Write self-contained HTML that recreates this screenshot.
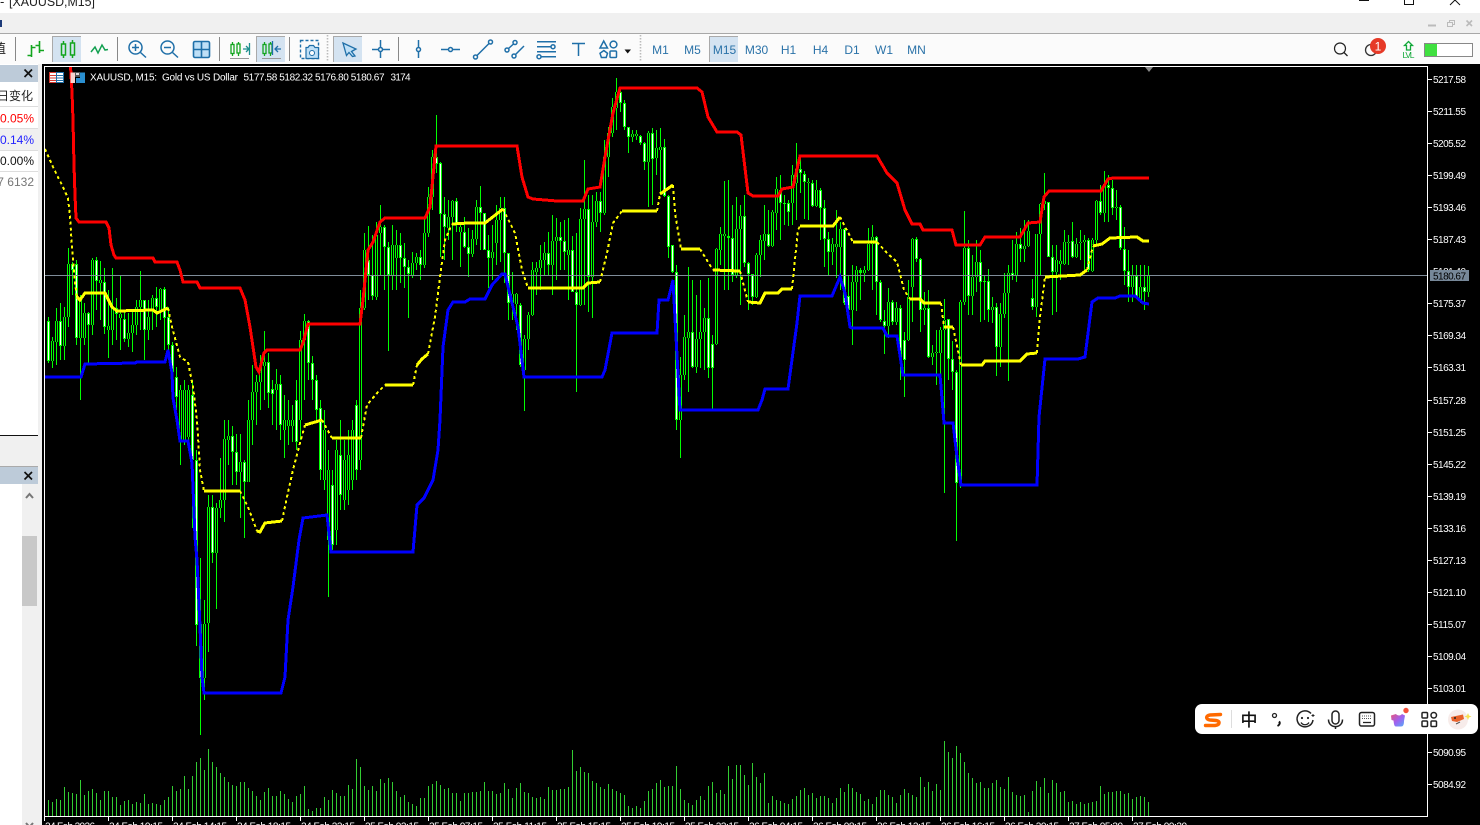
<!DOCTYPE html>
<html lang="zh"><head><meta charset="utf-8"><title>XAUUSD,M15</title>
<style>
html,body{margin:0;padding:0;width:1480px;height:825px;overflow:hidden;background:#000}
svg{display:block;font-family:"Liberation Sans","Noto Sans CJK SC",sans-serif}
.c{shape-rendering:crispEdges;fill:none}
.i{fill:none;stroke:#1f6fa8;stroke-width:1.5}
.tf{font-size:12px;fill:#2a72a8;text-anchor:middle}
.p{font-size:10px;fill:#fff}
.t{font-size:10px;fill:#fff}
</style></head><body>
<svg width="1480" height="825" viewBox="0 0 1480 825" xmlns="http://www.w3.org/2000/svg">
<!-- window chrome -->
<rect width="1480" height="13" fill="#fff"/>
<text x="0" y="6" font-size="13" fill="#222">-</text>
<text x="9" y="6" font-size="13" fill="#222" textLength="86" lengthAdjust="spacingAndGlyphs">[XAUUSD,M15]</text>
<path d="M1359 .5H1369M1404.5 0V4.5H1413.5V0M1450 5L1455 0L1460 5" fill="none" stroke="#111"/>
<rect y="13" width="1480" height="20" fill="#f0f0f0"/>
<rect x="0" y="20" width="2" height="7" fill="#1c3a78"/>
<path d="M1428 25.5H1436" stroke="#bbb" stroke-width="2"/>
<path d="M1447.5 22.5H1452.5V26.5H1447.5ZM1449.5 22V20.5H1454.5V24.5H1453" fill="none" stroke="#bbb"/>
<path d="M1466.5 20.5L1472 26M1472 20.5L1466.5 26" stroke="#bbb" stroke-width="1.6"/>
<rect y="33" width="1480" height="1" fill="#a8a8a8"/>
<rect y="34" width="1480" height="30" fill="#fbfbfb"/>
<!-- toolbar -->
<text x="-7" y="53" font-size="13" fill="#222">值</text>
<g fill="#888"><rect x="15" y="37" width="1" height="24"/><rect x="117" y="37" width="1" height="24"/><rect x="219" y="37" width="1" height="24"/><rect x="289" y="37" width="1" height="24"/><rect x="398" y="37" width="1" height="24"/></g>
<g fill="#d4e3f1"><rect x="52" y="36" width="29" height="26"/><rect x="256" y="36" width="29" height="26"/><rect x="333" y="36" width="29" height="26"/><rect x="709" y="36" width="29" height="26"/></g>
<path d="M52.5 62V36.5H81M256.5 62V36.5H285M333.5 62V36.5H362M709.5 62V36.5H738" fill="none" stroke="#aaa"/>
<path d="M31.5 45V57M31.5 47.5H35.5M27.5 55.5H31.5M39.5 41V53M35.5 45.5H39.5M39.5 50.5H44" fill="none" stroke="#12a51e" stroke-width="1.6"/>
<g fill="none" stroke="#12a51e" stroke-width="1.5"><rect x="61.5" y="44" width="4" height="11"/><rect x="70.5" y="43" width="4" height="12"/><path d="M63.5 41V44M63.5 55V58M72.5 40V43M72.5 55V58"/></g>
<path d="M91 52L95 47L98 53L102 45L105 50L108 49.5" fill="none" stroke="#12a050" stroke-width="1.5"/>
<g class="i"><circle cx="135.5" cy="47.5" r="6.5"/><path d="M140.5 52.5L146 57.5M132 47.5H139M135.5 44V51"/><circle cx="167.5" cy="47.5" r="6.5"/><path d="M172.5 52.5L178 57.5M164 47.5H171"/></g>
<rect x="193.5" y="41.5" width="16" height="16" rx="1.5" fill="#bfe0f7" stroke="#1f6fa8" stroke-width="1.6"/><path d="M201.5 41.5V57.5M193.5 49.5H209.5" stroke="#1f6fa8" stroke-width="1.6"/>
<g fill="none" stroke="#12a51e" stroke-width="1.3"><rect x="231" y="44.5" width="3" height="9"/><rect x="237" y="44" width="3" height="9"/><path d="M232.5 42V44.5M232.5 53.5V56M238.5 42V44M238.5 53V56"/><rect x="263" y="44.5" width="3" height="9"/><rect x="269" y="44" width="3" height="9"/><path d="M264.5 42V44.5M264.5 53.5V56M270.5 42V44M270.5 53V56"/></g>
<path d="M230 58.5H249M262 58.5H281" stroke="#999"/>
<path d="M243 49H248.5M246 46L249 49L246 52M249.5 43V55" fill="none" stroke="#1f8f8f" stroke-width="1.3"/>
<path d="M272.5 41V55" stroke="#1f6fa8" stroke-width="1.3"/><path d="M275 49H281M278 46L275 49L278 52" fill="none" stroke="#1f6fa8" stroke-width="1.3"/>
<rect x="300.5" y="40.5" width="18" height="18" fill="none" stroke="#1f6fa8" stroke-width="1.4" stroke-dasharray="3 2"/>
<path d="M306 47.5H308L309.5 45.5H313.5L315 47.5H318.5V58.5H306Z" fill="#bfe0f7" stroke="#1f6fa8" stroke-width="1.2"/><circle cx="312" cy="53" r="2.5" fill="#fff" stroke="#1f6fa8"/>
<path d="M327.5 35V62M640.5 35V62" stroke="#bbb" stroke-dasharray="1.5 1.5" stroke-width="1.6"/>
<path d="M343 43L356 49L351.5 51.5L355 56L352.5 56.5L349 52.5L346.5 55.5Z" fill="#bfe0f7" stroke="#1f6fa8" stroke-width="1.3"/>
<g class="i"><path d="M372 49.5H378M383 49.5H390M380.5 40V47M380.5 52V58"/><circle cx="380.5" cy="49.5" r="2"/><path d="M418.5 40V47M418.5 52V58"/><circle cx="418.5" cy="49.5" r="2"/><path d="M441 49.5H448M453 49.5H460"/><circle cx="450.5" cy="49.5" r="2"/><circle cx="475.5" cy="57" r="2"/><circle cx="490.5" cy="42" r="2"/><path d="M477 55.5L489 43.5"/><circle cx="507" cy="50" r="2"/><circle cx="515" cy="42.5" r="2"/><circle cx="514" cy="56" r="2"/><path d="M508.5 48.5L513.5 44M515.5 54.5L524 46"/><path d="M537 41.7H556M537 46.7H551M537 51.7H556M541 56.7H556"/><circle cx="553" cy="46.7" r="2"/><circle cx="539" cy="56.7" r="2"/><path d="M572 43.5H585M578.5 43.5V56"/><path d="M603.7 41L607.5 48H600Z"/><circle cx="613.5" cy="44.5" r="3.4"/><path d="M603.8 50.5L607.5 53.3L606.2 57.5H601.4L600 53.3Z"/><rect x="610" y="51" width="6.5" height="6.5" rx="1"/></g>
<path d="M624.5 49.5H631L627.7 53.5Z" fill="#111"/>
<text class="tf" x="660.500" y="54">M1</text><text class="tf" x="692.500" y="54">M5</text><text class="tf" x="724.500" y="54">M15</text><text class="tf" x="756.500" y="54">M30</text><text class="tf" x="788.500" y="54">H1</text><text class="tf" x="820.500" y="54">H4</text><text class="tf" x="852" y="54">D1</text><text class="tf" x="884" y="54">W1</text><text class="tf" x="916.500" y="54">MN</text>
<circle cx="1340" cy="48.5" r="5.5" fill="none" stroke="#222" stroke-width="1.2"/><path d="M1344 52.5L1347.5 56" stroke="#222" stroke-width="1.3"/>
<circle cx="1371" cy="50" r="5.5" fill="none" stroke="#333" stroke-width="1.3"/><circle cx="1378" cy="46" r="8" fill="#e63a28"/><text x="1378" y="50.5" font-size="12" fill="#fff" text-anchor="middle">1</text>
<path d="M1408.5 41.5L1412.5 45.5H1410.5V50H1406.5V45.5H1404.5Z" fill="none" stroke="#12a83a" stroke-width="1.3"/><text x="1408.5" y="58" font-size="8.5" fill="#12a83a" text-anchor="middle" textLength="12">LVL</text>
<rect x="1424.5" y="43.5" width="48" height="13" fill="#fff" stroke="#888"/><rect x="1425" y="44" width="12" height="12" fill="#40e040"/>
<!-- left panel -->
<rect y="64" width="42" height="761" fill="#fff"/>
<rect x="38" y="64" width="4" height="761" fill="#f0f0f0"/>
<rect y="65" width="38" height="17" fill="#bdcbd9"/>
<path d="M24.5 69.5L32 77M32 69.5L24.5 77" stroke="#111" stroke-width="1.7"/>
<rect y="129" width="38" height="21" fill="#f0f0f0"/>
<g fill="#ddd"><rect y="106" width="38" height="1"/><rect y="128" width="38" height="1"/><rect y="150" width="38" height="1"/><rect y="171" width="38" height="1"/></g>
<g font-size="12" text-anchor="end"><text x="33" y="100" fill="#222">日变化</text><text x="34" y="122.500" fill="#f00">0.05%</text><text x="34" y="144" fill="#2222ff">0.14%</text><text x="34" y="165" fill="#111">0.00%</text><text x="34" y="186" fill="#777">7 6132</text></g>
<rect y="435" width="38" height="1" fill="#111"/>
<rect y="436" width="38" height="30" fill="#f0f0f0"/>
<rect y="466" width="38" height="1" fill="#aaa"/>
<rect y="467" width="38" height="17" fill="#bdcbd9"/>
<path d="M24.500 472L32 479.500M32 472L24.500 479.500" stroke="#111" stroke-width="1.7"/>
<rect x="22" y="484" width="16" height="341" fill="#f0f0f0"/>
<rect x="22" y="536" width="15" height="70" fill="#c8c8c8"/>
<path d="M26 498L29.500 494L33 498M26 823L29.500 827L33 823" fill="none" stroke="#777" stroke-width="2"/>
<!-- chart -->
<rect x="42" y="64" width="1438" height="761" fill="#000"/>
<defs>
<path id="up" class="c" d="M52.500 341V361M56.500 321V342M64.500 317V346M68.500 264V317M80.500 300V338M84.500 313V338M92.500 260V325M100.500 280V283M108.500 326V330M112.500 307V330M120.500 314V318M128.500 333V339M132.500 325V333M136.500 307V325M140.500 300V307M148.500 317V330M152.500 298V310M160.500 289V310M180.500 390V440M184.500 390V440M188.500 390V437M204.500 624V678M208.500 507V623M216.500 508V553M220.500 500V508M224.500 439V500M228.500 436V440M240.500 462V472M248.500 420V482M252.500 392V420M256.500 382V392M260.500 366V382M264.500 362V366M276.500 384V390M284.500 420V430M288.500 420V426M292.500 420V426M300.500 340V420M304.500 321V340M324.500 430V480M328.500 470V540M336.500 450V530M344.500 460V500M348.500 455V490M352.500 430V480M360.500 308V460M364.500 250V308M376.500 235V297M380.500 227V233M392.500 245V275M396.500 245V258M412.500 263V275M416.500 257V263M424.500 233V265M428.500 197V233M432.500 157V197M448.500 217V228M452.500 201V217M460.500 227V232M472.500 239V254M476.500 207V239M492.500 252V258M496.500 220V243M500.500 208V220M512.500 294V303M516.500 294V304M524.500 339V370M528.500 315V339M532.500 270V315M536.500 268V272M540.500 260V268M544.500 253V260M552.500 241V265M556.500 237V241M568.500 250V255M580.500 219V305M584.500 209V219M592.500 222V277M596.500 201V222M604.500 157V213M608.500 133V157M612.500 107V133M616.500 92V108M632.500 134V137M636.500 134V136M648.500 133V162M656.500 148V158M660.500 147V150M680.500 375V420M684.500 337V375M688.500 332V338M696.500 339V367M700.500 332V339M704.500 318V332M716.500 249V344M720.500 234V250M724.500 234V236M736.500 229V275M740.500 216V229M756.500 255V297M760.500 240V255M764.500 234V241M772.500 212V246M776.500 189V213M792.500 175V203M796.500 169V183M808.500 182V183M816.500 190V206M832.500 244V252M836.500 244V247M840.500 229V247M852.500 282V310M856.500 270V282M864.500 270V273M868.500 244V270M872.500 237V244M888.500 302V326M896.500 308V322M908.500 297V340M912.500 239V287M924.500 308V310M932.500 353V357M936.500 352V353M940.500 330V353M944.500 320V330M960.500 302V483M964.500 248V302M972.500 277V296M976.500 262V277M992.500 307V310M1000.500 314V347M1004.500 293V314M1008.500 273V293M1016.500 244V276M1024.500 246V249M1028.500 231V246M1036.500 234V307M1040.500 204V234M1044.500 201V204M1056.500 260V272M1060.500 261V264M1064.500 242V264M1068.500 242V243M1076.500 244V257M1080.500 242V243M1084.500 240V242M1092.500 240V271M1096.500 201V240M1104.500 185V213M1116.500 207V208M1132.500 276V287M1140.500 287V300M1148.500 275V292"/>
</defs>
<!-- wicks -->
<path class="c" stroke="#0f0" stroke-width="1" d="M48.500 317V363M52.500 337V368M56.500 308V365M60.500 303V360M64.500 307V360M68.500 248V327M72.500 262V295M76.500 260V345M80.500 295V400M84.500 303V345M88.500 312V363M92.500 258V335M96.500 257V310M100.500 261V320M104.500 268V334M108.500 290V358M112.500 268V345M116.500 298V340M120.500 276V350M124.500 312V342M128.500 313V347M132.500 312V352M136.500 300V335M140.500 271V330M144.500 300V360M148.500 300V340M152.500 295V330M156.500 287V327M160.500 288V320M164.500 287V350M168.500 307V350M172.500 342V378M176.500 367V410M180.500 385V465M184.500 380V445M188.500 385V440M192.500 380V528M196.500 450V646M200.500 558V735M204.500 600V700M208.500 495V652M212.500 495V563M216.500 503V609M220.500 458V518M224.500 420V522M228.500 420V465M232.500 426V485M236.500 434V485M240.500 434V518M244.500 460V538M248.500 400V482M252.500 365V445M256.500 375V425M260.500 355V410M264.500 331V400M268.500 353V408M272.500 380V425M276.500 369V430M280.500 375V440M284.500 395V458M288.500 400V445M292.500 405V442M296.500 380V450M300.500 331V440M304.500 314V400M308.500 320V380M312.500 356V400M316.500 375V420M320.500 400V480M324.500 410V490M328.500 450V597M332.500 470V550M336.500 440V545M340.500 420V510M344.500 440V510M348.500 430V505M352.500 420V490M356.500 400V480M360.500 290V470M364.500 233V310M368.500 226V300M372.500 235V300M376.500 222V300M380.500 205V275M384.500 225V290M388.500 242V351M392.500 225V290M396.500 230V290M400.500 233V283M404.500 243V288M408.500 260V318M412.500 252V278M416.500 253V270M420.500 250V280M424.500 218V268M428.500 187V237M432.500 150V210M436.500 115V173M440.500 162V257M444.500 197V260M448.500 200V240M452.500 200V260M456.500 198V232M460.500 225V267M464.500 217V248M468.500 228V277M472.500 230V257M476.500 200V245M480.500 186V250M484.500 213V250M488.500 235V288M492.500 225V280M496.500 205V265M500.500 197V262M504.500 197V283M508.500 253V320M512.500 272V320M516.500 293V330M520.500 303V367M524.500 335V411M528.500 312V350M532.500 262V316M536.500 262V295M540.500 245V290M544.500 242V275M548.500 232V275M552.500 215V295M556.500 218V280M560.500 222V270M564.500 220V270M568.500 218V300M572.500 236V292M576.500 233V392M580.500 208V306M584.500 160V305M588.500 195V312M592.500 195V318M596.500 192V227M600.500 192V232M604.500 140V215M608.500 127V177M612.500 98V137M616.500 78V130M620.500 88V112M624.500 100V130M628.500 127V153M632.500 130V142M636.500 130V140M640.500 135V145M644.500 142V170M648.500 131V207M652.500 128V205M656.500 130V175M660.500 128V193M664.500 139V197M668.500 195V258M672.500 245V273M676.500 265V430M680.500 357V458M684.500 315V380M688.500 267V392M692.500 280V368M696.500 295V373M700.500 280V368M704.500 308V370M708.500 278V378M712.500 335V410M716.500 248V345M720.500 227V265M724.500 181V290M728.500 180V290M732.500 205V282M736.500 197V278M740.500 205V305M744.500 195V267M748.500 262V310M752.500 274V305M756.500 253V298M760.500 235V277M764.500 205V260M768.500 210V247M772.500 210V247M776.500 177V230M780.500 175V240M784.500 195V225M788.500 200V226M792.500 165V225M796.500 143V220M800.500 155V193M804.500 171V219M808.500 178V220M812.500 180V207M816.500 180V207M820.500 188V240M824.500 200V267M828.500 232V275M832.500 238V265M836.500 210V278M840.500 222V290M844.500 228V305M848.500 275V325M852.500 265V345M856.500 266V311M860.500 268V300M864.500 266V282M868.500 228V271M872.500 225V290M876.500 236V315M880.500 280V322M884.500 310V354M888.500 288V338M892.500 300V325M896.500 302V325M900.500 305V380M904.500 332V397M908.500 280V341M912.500 238V322M916.500 237V262M920.500 258V332M924.500 292V325M928.500 290V358M932.500 345V365M936.500 330V385M940.500 327V385M944.500 299V493M948.500 319V380M952.500 341V390M956.500 370V541M960.500 300V488M964.500 211V305M968.500 240V315M972.500 255V315M976.500 240V292M980.500 250V322M984.500 275V320M988.500 269V322M992.500 297V323M996.500 303V376M1000.500 303V367M1004.500 273V318M1008.500 265V381M1012.500 240V280M1016.500 232V282M1020.500 228V262M1024.500 220V262M1028.500 220V247M1032.500 279V310M1036.500 234V317M1040.500 203V275M1044.500 173V210M1048.500 203V257M1052.500 245V315M1056.500 245V312M1060.500 250V280M1064.500 230V265M1068.500 235V265M1072.500 222V258M1076.500 238V258M1080.500 230V260M1084.500 235V270M1088.500 238V272M1092.500 238V272M1096.500 200V245M1100.500 185V215M1104.500 171V222M1108.500 175V222M1112.500 180V215M1116.500 190V220M1120.500 205V250M1124.500 227V285M1128.500 250V302M1132.500 265V302M1136.500 265V298M1140.500 265V303M1144.500 265V310M1148.500 266V297"/>
<!-- bodies -->
<use href="#up" stroke="#0f0" stroke-width="3"/>
<path class="c" stroke="#0f0" stroke-width="3" d="M48.500 321V361M60.500 321V346M72.500 264V270M76.500 264V338M88.500 313V325M96.500 260V281M104.500 282V327M116.500 308V314M124.500 319V339M144.500 300V330M156.500 298V307M164.500 289V318M168.500 317V345M172.500 345V372M176.500 377V397M192.500 395V460M196.500 460V625M200.500 624V678M212.500 507V553M232.500 436V452M236.500 452V472M244.500 462V482M268.500 362V393M272.500 389V394M280.500 384V425M296.500 400V442M308.500 321V363M312.500 363V380M316.500 380V410M320.500 408V470M332.500 485V545M340.500 455V495M356.500 405V470M368.500 260V275M372.500 275V296M384.500 227V247M388.500 247V275M400.500 245V258M404.500 258V267M408.500 267V274M420.500 257V265M436.500 157V164M440.500 163V214M444.500 214V227M456.500 201V223M464.500 232V247M468.500 247V254M480.500 207V213M484.500 213V250M488.500 250V258M504.500 208V253M508.500 253V303M520.500 305V365M548.500 253V265M560.500 237V241M564.500 241V252M572.500 250V292M576.500 292V305M588.500 209V277M600.500 201V213M620.500 92V103M624.500 103V127M628.500 127V137M640.500 136V143M644.500 143V162M652.500 133V159M664.500 147V196M668.500 196V247M672.500 245V272M676.500 272V420M692.500 332V367M708.500 318V368M712.500 344V368M728.500 236V238M732.500 238V275M744.500 216V263M748.500 263V274M752.500 274V297M768.500 234V246M780.500 190V203M784.500 203V204M788.500 203V212M800.500 169V173M804.500 174V182M812.500 183V206M820.500 190V208M824.500 208V239M828.500 239V252M844.500 229V303M848.500 296V310M860.500 270V273M876.500 237V282M880.500 282V320M884.500 321V326M892.500 302V322M900.500 308V360M904.500 340V360M916.500 239V259M920.500 259V310M928.500 308V357M948.500 319V359M952.500 359V372M956.500 372V483M968.500 248V296M980.500 262V282M984.500 281V282M988.500 281V310M996.500 307V347M1012.500 273V276M1020.500 244V249M1032.500 298V307M1048.500 202V257M1052.500 257V272M1072.500 241V257M1088.500 240V270M1100.500 201V213M1108.500 185V188M1112.500 188V208M1120.500 207V248M1124.500 249V271M1128.500 271V287M1136.500 276V297M1144.500 287V292"/>
<use href="#up" stroke="#000" stroke-width="1"/>
<path class="c" stroke="#fff" stroke-width="1" d="M48.500 322V360M60.500 322V345M72.500 265V269M76.500 265V337M88.500 314V324M96.500 261V280M104.500 283V326M116.500 309V313M124.500 320V338M144.500 301V329M156.500 299V306M164.500 290V317M168.500 318V344M172.500 346V371M176.500 378V396M192.500 396V459M196.500 461V624M200.500 625V677M212.500 508V552M232.500 437V451M236.500 453V471M244.500 463V481M268.500 363V392M272.500 390V393M280.500 385V424M296.500 401V441M308.500 322V362M312.500 364V379M316.500 381V409M320.500 409V469M332.500 486V544M340.500 456V494M356.500 406V469M368.500 261V274M372.500 276V295M384.500 228V246M388.500 248V274M400.500 246V257M404.500 259V266M408.500 268V273M420.500 258V264M436.500 158V163M440.500 164V213M444.500 215V226M456.500 202V222M464.500 233V246M468.500 248V253M480.500 208V212M484.500 214V249M488.500 251V257M504.500 209V252M508.500 254V302M520.500 306V364M548.500 254V264M560.500 238V240M564.500 242V251M572.500 251V291M576.500 293V304M588.500 210V276M600.500 202V212M620.500 93V102M624.500 104V126M628.500 128V136M640.500 137V142M644.500 144V161M652.500 134V158M664.500 148V195M668.500 197V246M672.500 246V271M676.500 273V419M692.500 333V366M708.500 319V367M712.500 345V367M732.500 239V274M744.500 217V262M748.500 264V273M752.500 275V296M768.500 235V245M780.500 191V202M788.500 204V211M800.500 170V172M804.500 175V181M812.500 184V205M820.500 191V207M824.500 209V238M828.500 240V251M844.500 230V302M848.500 297V309M876.500 238V281M880.500 283V319M884.500 322V325M892.500 303V321M900.500 309V359M904.500 341V359M916.500 240V258M920.500 260V309M928.500 309V356M948.500 320V358M952.500 360V371M956.500 373V482M968.500 249V295M980.500 263V281M988.500 282V309M996.500 308V346M1012.500 274V275M1020.500 245V248M1032.500 299V306M1048.500 203V256M1052.500 258V271M1072.500 242V256M1088.500 241V269M1100.500 202V212M1108.500 186V187M1112.500 189V207M1120.500 208V247M1124.500 250V270M1128.500 272V286M1136.500 277V296M1144.500 288V291"/>
<!-- bid line -->
<rect x="45" y="275" width="1382" height="1" fill="#7f8c99"/>
<!-- envelope lines -->
<polyline class="c" stroke="#f00" stroke-width="3" points="70.500,66 72,92 73,120 74,165 75,195 76,218 79,222 106,222 109,228 111,245 114,255 116,258 153,258 155,262 177,262 180,270 183,282 197,282 200,288 240,288 245,300 250,327 256,367 259,372 264,353 267,350 300,350 303,343 308,324 360,324 363,300 368,250 373,242 380,222 385,218 425,218 430,207 436,146 517,146 522,177 528,197 533,199 557,201 583,201 588,189 600,187 605,157 613,113 620,88 697,88 702,92 708,117 717,132 737,132 741,135 748,193 753,196 778,196 782,189 793,187 800,156 877,156 887,173 897,183 905,210 912,224 920,224 923,230 952,230 956,245 980,245 985,237 1020,237 1028,223 1040,222 1044,197 1049,191 1101,191 1108,179 1113,178 1149,178"/>
<polyline class="c" stroke="#00f" stroke-width="3" points="45,377 81,377 85,364 135,363 137,362 165,362 168,350 172,373 173,398 177,420 180,441 188,441 192,463 195,537 197,560 200,627 202,677 204,693 281,693 285,677 288,620 293,587 299,540 303,518 327,515 331,552 413,552 417,505 424,498 433,480 438,450 440,420 443,347 448,310 453,302 465,302 470,299 485,299 492,285 502,274 505,274 512,303 518,327 524,377 602,377 605,370 612,333 657,333 659,300 668,300 673,280 676,337 680,410 758,410 762,400 765,389 788,389 797,323 800,296 832,296 840,277 845,293 850,327 852,328 883,328 887,336 897,336 903,375 940,375 944,423 953,423 957,457 961,485 1037,485 1039,417 1045,359 1078,359 1085,357 1092,302 1098,298 1115,298 1120,296 1135,296 1143,303 1149,304"/>
<g class="c" stroke="#ff0" stroke-width="3">
<polyline points="77,297 80,300 85,293 105,293 112,307 117,311 153,310 157,313 168,308"/>
<polyline points="204,491 240,491"/><polyline points="257,531 260,532 265,523 282,521"/>
<polyline points="305,425 322,420"/><polyline points="332,438 361,438"/><polyline points="385,385 413,385"/><polyline points="417,365 422,359 428,354"/>
<polyline points="452,224 468,223 485,223 503,209"/><polyline points="528,288 583,288 588,283 600,282"/><polyline points="622,211 657,211"/><polyline points="660,194 673,185"/>
<polyline points="681,249 700,249"/><polyline points="713,270 740,271"/><polyline points="748,302 760,303 765,293 778,293 782,289 792,289"/>
<polyline points="800,226 833,226 840,217"/><polyline points="853,242 877,242"/><polyline points="910,299 920,299 924,303 941,303"/><polyline points="944,327 953,327"/>
<polyline points="961,365 982,365 985,361 1020,361 1027,354 1037,353"/><polyline points="1045,277 1080,275 1087,270"/><polyline points="1093,246 1102,244 1110,238 1137,237 1143,241 1149,241"/>
</g>
<g class="c" stroke="#ff0" stroke-width="2" stroke-dasharray="3 3">
<polyline points="45,149 53,167 63,187 68,198 70,217 72,247 75,283 77,297"/>
<polyline points="168,308 172,327 180,357 188,362 193,387 197,420 200,470 204,491"/>
<polyline points="240,491 248,507 257,531"/><polyline points="282,521 287,497 293,470 300,443 305,425"/><polyline points="322,420 332,438"/><polyline points="361,438 367,405 378,392 385,385"/><polyline points="413,385 417,365"/>
<polyline points="428,354 435,317 440,277 445,240 452,224"/><polyline points="503,209 515,233 522,270 528,288"/><polyline points="600,282 607,253 613,223 622,211"/><polyline points="657,211 660,194"/><polyline points="673,185 675,213 681,249"/>
<polyline points="700,249 713,270"/><polyline points="740,271 748,302"/><polyline points="792,289 798,230 800,226"/><polyline points="840,217 853,242"/><polyline points="877,242 887,253 897,262 904,290 910,299"/><polyline points="941,303 944,327"/><polyline points="953,327 961,365"/><polyline points="1037,353 1040,317 1045,277"/><polyline points="1087,270 1093,246"/>
</g>
<!-- volumes -->
<path class="c" stroke="#32cd32" stroke-width="1" d="M48.500 800V816M52.500 802V816M56.500 799V816M60.500 800V816M64.500 787V816M68.500 792V816M72.500 793V816M76.500 794V816M80.500 780V816M84.500 795V816M88.500 791V816M92.500 789V816M96.500 793V816M100.500 800V816M104.500 791V816M108.500 791V816M112.500 797V816M116.500 797V816M120.500 805V816M124.500 801V816M128.500 800V816M132.500 804V816M136.500 802V816M140.500 803V816M144.500 794V816M148.500 804V816M152.500 803V816M156.500 804V816M160.500 805V816M164.500 800V816M168.500 797V816M172.500 786V816M176.500 791V816M180.500 789V816M184.500 776V816M188.500 789V816M192.500 776V816M196.500 762V816M200.500 758V816M204.500 770V816M208.500 749V816M212.500 762V816M216.500 767V816M220.500 773V816M224.500 777V816M228.500 782V816M232.500 785V816M236.500 786V816M240.500 782V816M244.500 782V816M248.500 788V816M252.500 791V816M256.500 796V816M260.500 800V816M264.500 792V816M268.500 788V816M272.500 796V816M276.500 796V816M280.500 791V816M284.500 794V816M288.500 799V816M292.500 802V816M296.500 796V816M300.500 794V816M304.500 786V816M308.500 809V816M312.500 811V816M316.500 808V816M320.500 808V816M324.500 797V816M328.500 800V816M332.500 790V816M336.500 793V816M340.500 796V816M344.500 796V816M348.500 785V816M352.500 789V816M356.500 759V816M360.500 767V816M364.500 786V816M368.500 790V816M372.500 786V816M376.500 791V816M380.500 779V816M384.500 783V816M388.500 778V816M392.500 782V816M396.500 791V816M400.500 797V816M404.500 795V816M408.500 802V816M412.500 804V816M416.500 806V816M420.500 798V816M424.500 798V816M428.500 786V816M432.500 784V816M436.500 781V816M440.500 785V816M444.500 789V816M448.500 788V816M452.500 793V816M456.500 793V816M460.500 801V816M464.500 793V816M468.500 793V816M472.500 792V816M476.500 792V816M480.500 791V816M484.500 782V816M488.500 791V816M492.500 791V816M496.500 794V816M500.500 793V816M504.500 783V816M508.500 789V816M512.500 798V816M516.500 788V816M520.500 783V816M524.500 792V816M528.500 793V816M532.500 797V816M536.500 798V816M540.500 797V816M544.500 799V816M548.500 787V816M552.500 790V816M556.500 790V816M560.500 789V816M564.500 789V816M568.500 787V816M572.500 750V816M576.500 771V816M580.500 767V816M584.500 772V816M588.500 773V816M592.500 781V816M596.500 783V816M600.500 787V816M604.500 789V816M608.500 784V816M612.500 789V816M616.500 791V816M620.500 793V816M624.500 795V816M628.500 806V816M632.500 808V816M636.500 806V816M640.500 808V816M644.500 801V816M648.500 791V816M652.500 789V816M656.500 783V816M660.500 780V816M664.500 787V816M668.500 786V816M672.500 786V816M676.500 766V816M680.500 789V816M684.500 800V816M688.500 803V816M692.500 805V816M696.500 800V816M700.500 796V816M704.500 800V816M708.500 786V816M712.500 782V816M716.500 793V816M720.500 790V816M724.500 794V816M728.500 766V816M732.500 779V816M736.500 765V816M740.500 765V816M744.500 775V816M748.500 785V816M752.500 763V816M756.500 777V816M760.500 783V816M764.500 773V816M768.500 803V816M772.500 796V816M776.500 800V816M780.500 801V816M784.500 803V816M788.500 804V816M792.500 799V816M796.500 796V816M800.500 790V816M804.500 788V816M808.500 795V816M812.500 793V816M816.500 798V816M820.500 796V816M824.500 796V816M828.500 798V816M832.500 803V816M836.500 798V816M840.500 788V816M844.500 792V816M848.500 784V816M852.500 788V816M856.500 792V816M860.500 794V816M864.500 801V816M868.500 799V816M872.500 804V816M876.500 797V816M880.500 790V816M884.500 790V816M888.500 795V816M892.500 797V816M896.500 803V816M900.500 795V816M904.500 789V816M908.500 793V816M912.500 795V816M916.500 797V816M920.500 777V816M924.500 787V816M928.500 782V816M932.500 791V816M936.500 784V816M940.500 790V816M944.500 741V816M948.500 752V816M952.500 758V816M956.500 746V816M960.500 753V816M964.500 762V816M968.500 773V816M972.500 778V816M976.500 783V816M980.500 782V816M984.500 788V816M988.500 788V816M992.500 783V816M996.500 780V816M1000.500 787V816M1004.500 789V816M1008.500 777V816M1012.500 792V816M1016.500 795V816M1020.500 796V816M1024.500 795V816M1028.500 812V816M1032.500 791V816M1036.500 781V816M1040.500 787V816M1044.500 778V816M1048.500 793V816M1052.500 780V816M1056.500 783V816M1060.500 792V816M1064.500 791V816M1068.500 802V816M1072.500 801V816M1076.500 804V816M1080.500 802V816M1084.500 804V816M1088.500 803V816M1092.500 802V816M1096.500 801V816M1100.500 786V816M1104.500 794V816M1108.500 792V816M1112.500 792V816M1116.500 791V816M1120.500 791V816M1124.500 794V816M1128.500 793V816M1132.500 799V816M1136.500 797V816M1140.500 796V816M1144.500 797V816M1148.500 802V816"/>
<!-- frame -->
<path class="c" stroke="#fff" stroke-width="1" d="M44.500 66.500H1427.500V816.500H44.500ZM44.500 817V821M108.500 817V821M172.500 817V821M236.500 817V821M300.500 817V821M364.500 817V821M428.500 817V821M492.500 817V821M556.500 817V821M620.500 817V821M684.500 817V821M748.500 817V821M812.500 817V821M876.500 817V821M940.500 817V821M1004.500 817V821M1068.500 817V821M1132.500 817V821M1428 79.500H1432M1428 111.500H1432M1428 143.500H1432M1428 175.500H1432M1428 207.500H1432M1428 239.500H1432M1428 303.500H1432M1428 335.500H1432M1428 367.500H1432M1428 400.500H1432M1428 432.500H1432M1428 464.500H1432M1428 496.500H1432M1428 528.500H1432M1428 560.500H1432M1428 592.500H1432M1428 624.500H1432M1428 656.500H1432M1428 688.500H1432M1428 752.500H1432M1428 784.500H1432"/>
<polygon points="1145,67 1153,67 1149,72" fill="#888"/>
<!-- header icons -->
<rect x="49.500" y="72.500" width="7" height="10" fill="#fff" stroke="#d63a30"/><rect x="56.500" y="72.500" width="7" height="10" fill="#fff" stroke="#1f6fa8"/>
<path d="M50 75.500H56M50 78H56M50 80.500H56" stroke="#d63a30"/><path d="M57 75.500H63M57 78H63M57 80.500H63" stroke="#1f6fa8"/>
<path d="M70.500 72.500H75V83H70.500Z" fill="#f7d3cd"/><rect x="75" y="72" width="5" height="5" fill="#555"/><rect x="76" y="73" width="3" height="2" fill="#ddd"/><path d="M80 76V72.500H85V83H76V78H80Z" fill="#2a8fd0"/>
<text x="90" y="80.500" class="t" textLength="148" lengthAdjust="spacing" xml:space="preserve" style="white-space:pre">XAUUSD, M15:  Gold vs US Dollar</text>
<text x="243.500" y="80.500" class="t" textLength="141" lengthAdjust="spacing">5177.58 5182.32 5176.80 5180.67</text>
<text x="390.500" y="80.500" class="t" textLength="20" lengthAdjust="spacing">3174</text>
<!-- price labels -->
<g class="p">
<text x="1433" y="83" textLength="33">5217.58</text><text x="1433" y="115" textLength="33">5211.55</text><text x="1433" y="147" textLength="33">5205.52</text><text x="1433" y="179" textLength="33">5199.49</text><text x="1433" y="211" textLength="33">5193.46</text><text x="1433" y="243" textLength="33">5187.43</text><text x="1433" y="275" textLength="33">5181.40</text><text x="1433" y="307" textLength="33">5175.37</text><text x="1433" y="339" textLength="33">5169.34</text><text x="1433" y="371" textLength="33">5163.31</text><text x="1433" y="404" textLength="33">5157.28</text><text x="1433" y="436" textLength="33">5151.25</text><text x="1433" y="468" textLength="33">5145.22</text><text x="1433" y="500" textLength="33">5139.19</text><text x="1433" y="532" textLength="33">5133.16</text><text x="1433" y="564" textLength="33">5127.13</text><text x="1433" y="596" textLength="33">5121.10</text><text x="1433" y="628" textLength="33">5115.07</text><text x="1433" y="660" textLength="33">5109.04</text><text x="1433" y="692" textLength="33">5103.01</text><text x="1433" y="756" textLength="33">5090.95</text><text x="1433" y="788" textLength="33">5084.92</text>
</g>
<rect x="1430" y="270" width="39" height="11" fill="#778899"/>
<text x="1433" y="279.500" font-size="10" fill="#000" textLength="33">5180.67</text>
<!-- time labels -->
<g class="t">
<text x="45" y="829.500" textLength="50">24 Feb 2026</text><text x="109" y="829.500" textLength="54">24 Feb 10:15</text><text x="173" y="829.500" textLength="54">24 Feb 14:15</text><text x="237" y="829.500" textLength="54">24 Feb 18:15</text><text x="301" y="829.500" textLength="54">24 Feb 22:15</text><text x="365" y="829.500" textLength="54">25 Feb 02:15</text><text x="429" y="829.500" textLength="54">25 Feb 07:15</text><text x="493" y="829.500" textLength="54">25 Feb 11:15</text><text x="557" y="829.500" textLength="54">25 Feb 15:15</text><text x="621" y="829.500" textLength="54">25 Feb 19:15</text><text x="685" y="829.500" textLength="54">25 Feb 23:15</text><text x="749" y="829.500" textLength="54">26 Feb 04:15</text><text x="813" y="829.500" textLength="54">26 Feb 08:15</text><text x="877" y="829.500" textLength="54">26 Feb 12:15</text><text x="941" y="829.500" textLength="54">26 Feb 16:15</text><text x="1005" y="829.500" textLength="54">26 Feb 20:15</text><text x="1069" y="829.500" textLength="54">27 Feb 05:30</text><text x="1133" y="829.500" textLength="54">27 Feb 09:30</text>
</g>
<!-- IME bar -->
<rect x="1195" y="704" width="283" height="30" rx="7" fill="#fff"/>
<path d="M1220.500 714.500L1210 715C1205.500 715.500 1205.500 719.500 1210 720L1216 720.500C1220.500 721 1220 725 1215 725.500L1205.500 725.500" fill="none" stroke="#ff6a00" stroke-width="3.400" stroke-linecap="round"/>
<rect x="1231" y="710" width="1" height="18" fill="#ddd"/>
<text x="1249" y="726" font-size="17" text-anchor="middle" fill="#111" font-family="'Noto Sans CJK SC',sans-serif" font-weight="500">中</text>
<circle cx="1274.500" cy="715.500" r="2" fill="none" stroke="#222" stroke-width="1.300"/>
<path d="M1279 721.500C1280.500 723 1279.500 725 1277.500 726" fill="none" stroke="#111" stroke-width="2"/>
<path d="M1311 713.500A8 8 0 1 0 1313 720" fill="none" stroke="#222" stroke-width="1.500"/><path d="M1311.500 715.500H1314.500M1313 714V717" stroke="#222"/>
<circle cx="1302" cy="718" r="1.100" fill="#222"/><circle cx="1308" cy="718" r="1.100" fill="#222"/><path d="M1301 722.500C1303 725.500 1307 725.500 1309 722.500" fill="none" stroke="#222" stroke-width="1.300"/>
<rect x="1332" y="711" width="7" height="13" rx="3.500" fill="none" stroke="#222" stroke-width="1.500"/><path d="M1328.500 719.500C1328.500 729 1342.500 729 1342.500 719.500M1335.500 726.500V729" fill="none" stroke="#222" stroke-width="1.500"/>
<rect x="1359.500" y="712.500" width="15" height="13.500" rx="2" fill="#fff" stroke="#222" stroke-width="1.500"/><path d="M1362 716H1372M1362 718.500H1372" stroke="#555" stroke-dasharray="1 1"/><path d="M1363 722.500H1371" stroke="#222" stroke-width="1.300"/>
<defs><linearGradient id="sh" x1="0" y1="0" x2="1" y2="1"><stop offset="0" stop-color="#e8557a"/><stop offset=".5" stop-color="#a060f0"/><stop offset="1" stop-color="#50b0f8"/></linearGradient></defs>
<path d="M1391 715.500L1396 714C1397.500 716 1400.500 716 1402 714L1405 715.500L1404 721C1404 725 1403 726.500 1401 726.500H1396C1394.500 726.500 1394 725 1393.500 720.500L1391.500 720Z" fill="url(#sh)"/><circle cx="1406" cy="710.500" r="2.700" fill="#f4503a"/>
<g fill="none" stroke="#222" stroke-width="1.500"><rect x="1422" y="712.500" width="5.500" height="5.500" rx="1"/><rect x="1431" y="712.500" width="5.500" height="5.500" rx="2.700"/><rect x="1422" y="721" width="5.500" height="5.500" rx="1"/><rect x="1431" y="721" width="5.500" height="5.500" rx="1"/></g>
<circle cx="1458" cy="719.500" r="10" fill="#f7ecea"/><path d="M1451 717L1463 714.500L1464 719L1457 722L1452 721Z" fill="#e8622a"/><circle cx="1455" cy="718" r="1" fill="#222"/><path d="M1456 724L1460 722" stroke="#555"/>
<path d="M1468 713L1469 715.500L1471.500 716.500L1469 717.500L1468 720L1467 717.500L1464.500 716.500L1467 715.500Z" fill="#f7e050"/>
</svg>
</body></html>
